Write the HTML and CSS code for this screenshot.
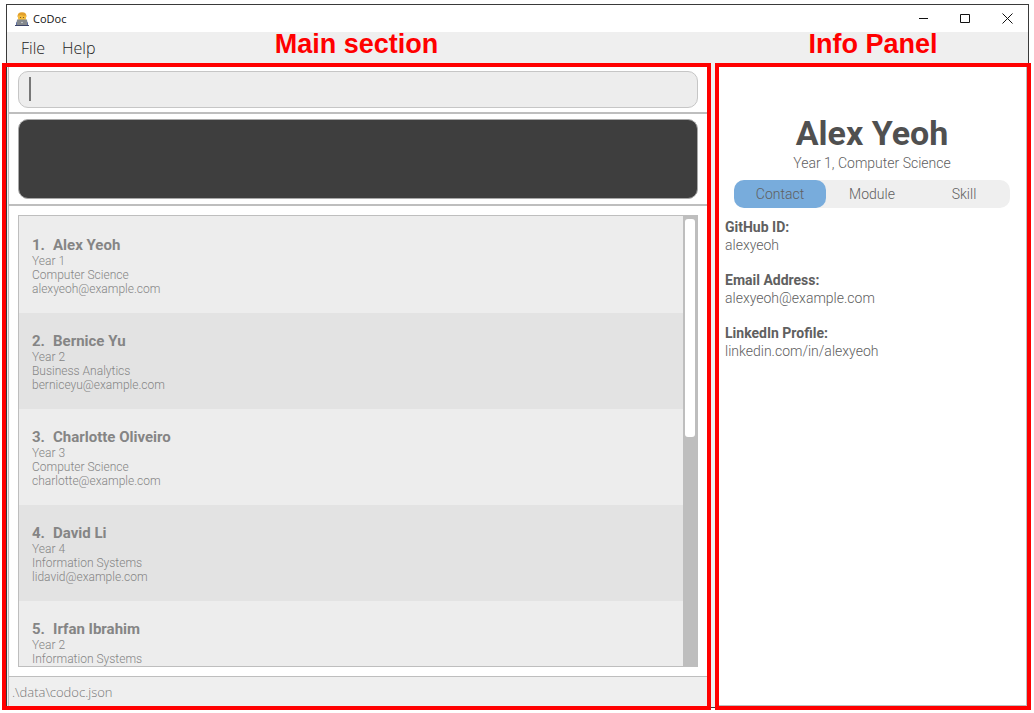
FILE: index.html
```html
<!DOCTYPE html>
<html lang="en">
<head>
<meta charset="utf-8">
<title>CoDoc</title>
<link rel="stylesheet" href="styles.css">
</head>
<body>
<div class="window">
  <header class="titlebar">
    <svg class="app-icon" viewBox="0 0 14 14" aria-hidden="true">
      <path d="M1 14v-2q0-3 3-3.500h6q3 .5 3 3.500v2z" fill="#3a55a4"/>
      <rect x="3" y="1.500" width="8" height="8" rx="3.500" fill="#f5bd3c"/>
      <path d="M2.500 5.500Q2 .3 7 .2q5 .1 4.500 5.300l-1-2Q8 4.200 6 3l-2.500.8z" fill="#e2a02b"/>
      <circle cx="5.500" cy="5.500" r=".6" fill="#6b4a2a"/>
      <circle cx="8.500" cy="5.500" r=".6" fill="#6b4a2a"/>
      <path d="M2 7.500h10l.5 5.500h-11z" fill="#85898d"/>
      <path d="M0 13h14v1H0z" fill="#3c4468"/>
      <circle cx="7" cy="10.500" r=".8" fill="#d5d8da"/>
    </svg>
    <span class="app-name">CoDoc</span>
    <div class="window-controls">
      <button type="button" aria-label="Minimize"><svg viewBox="0 0 11 11"><path d="M1 5.500h9"/></svg></button>
      <button type="button" aria-label="Maximize"><svg viewBox="0 0 11 11"><path d="M.5 1.500h9v8h-9z"/></svg></button>
      <button type="button" aria-label="Close"><svg viewBox="0 0 11 11"><path d="M.5.5l10 10M10.500.5l-10 10"/></svg></button>
    </div>
  </header>
  <nav class="menubar" aria-label="Menu">
    <button type="button">File</button>
    <button type="button">Help</button>
  </nav>
  <div class="workspace">
    <main class="main-section">
      <div class="callout callout-main"><span>Main section</span></div>
      <div class="command-row">
        <input class="command" type="text" aria-label="Command">
        <span class="caret"></span>
      </div>
      <div class="result-row"><output class="result" aria-label="Result"></output></div>
      <div class="list-row">
        <div class="list-frame">
          <ol class="people">
            <li><h2><span>1.</span>Alex Yeoh</h2><p>Year 1</p><p>Computer Science</p><p>alexyeoh@example.com</p></li>
            <li><h2><span>2.</span>Bernice Yu</h2><p>Year 2</p><p>Business Analytics</p><p>berniceyu@example.com</p></li>
            <li><h2><span>3.</span>Charlotte Oliveiro</h2><p>Year 3</p><p>Computer Science</p><p>charlotte@example.com</p></li>
            <li><h2><span>4.</span>David Li</h2><p>Year 4</p><p>Information Systems</p><p>lidavid@example.com</p></li>
            <li><h2><span>5.</span>Irfan Ibrahim</h2><p>Year 2</p><p>Information Systems</p></li>
          </ol>
          <div class="scrollbar"><div class="thumb"></div></div>
        </div>
      </div>
      <footer class="status">.\data\codoc.json</footer>
    </main>
    <aside class="info-panel">
      <div class="callout callout-info"><span>Info Panel</span></div>
      <div class="profile">
        <h1>Alex Yeoh</h1>
        <p class="course">Year 1, Computer Science</p>
        <div class="tabs" role="tablist">
          <button type="button" role="tab" aria-selected="true">Contact</button>
          <button type="button" role="tab" aria-selected="false">Module</button>
          <button type="button" role="tab" aria-selected="false">Skill</button>
        </div>
      </div>
      <dl class="details">
        <div><dt>GitHub ID:</dt><dd>alexyeoh</dd></div>
        <div><dt>Email Address:</dt><dd>alexyeoh@example.com</dd></div>
        <div><dt>LinkedIn Profile:</dt><dd>linkedin.com/in/alexyeoh</dd></div>
      </dl>
    </aside>
  </div>
</div>
</body>
</html>
```
FILE: styles.css
```css
* { box-sizing: border-box; }

body {
  margin: 0;
  padding: 4px 5px 5px 6px;
  height: 100vh;
  background: #fff;
  font-family: Roboto, "Liberation Sans", sans-serif;
  font-weight: 300;
  overflow: hidden;
}

h1, h2, p, ol, dl, dd { margin: 0; padding: 0; }
button { border: 0; padding: 0; background: none; font: inherit; color: inherit; }

.window {
  display: flex;
  flex-direction: column;
  height: 100%;
  border: 1px solid #3a3a3a;
  background: #efefef;
}

.titlebar {
  display: flex;
  align-items: center;
  height: 27px;
  padding-left: 8px;
  background: #fff;
}
.app-icon { width: 14px; height: 14px; }
.app-name {
  margin-left: 4px;
  font: 400 11px/16px "Open Sans", sans-serif;
  color: #111;
}
.window-controls { display: flex; height: 100%; margin-left: auto; }
.window-controls button {
  display: flex;
  align-items: center;
  justify-content: center;
  width: 42px;
}
.window-controls svg { width: 11px; height: 11px; fill: none; stroke: #111; }

.menubar {
  display: flex;
  gap: 17px;
  height: 31px;
  padding-left: 14px;
  font: 300 16px "Open Sans", sans-serif;
  color: #222;
}

.workspace {
  flex: 1;
  display: grid;
  grid-template-columns: minmax(0, 1fr) 308px;
  gap: 12px;
  min-height: 0;
  padding: 0 1px;
}

.main-section, .info-panel {
  position: relative;
  display: flex;
  flex-direction: column;
  min-height: 0;
  background: #fff;
}
.main-section { border-left: 1px solid #bebebe; }

.command-row, .result-row { border-bottom: 2px solid #bebebe; }
.command-row { position: relative; padding: 8px 9px 4px; }
.command {
  display: block;
  width: 100%;
  height: 37px;
  padding: 0 10px;
  border: 1px solid #c6c6c6;
  border-radius: 10px;
  background: #ededed;
  font: inherit;
  font-size: 18px;
  outline: none;
}
.caret {
  position: absolute;
  left: 20px;
  top: 14px;
  width: 2px;
  height: 24px;
  background: #777;
}
.result-row { padding: 5px 9px; }
.result {
  display: block;
  height: 80px;
  border: 1px solid #a8a8a8;
  border-radius: 10px;
  background: #3e3e3e;
}

.list-row { flex: 1; display: flex; min-height: 0; padding: 9px; }
.list-frame {
  flex: 1;
  display: flex;
  border: 1px solid #bebebe;
  background: #ededed;
  overflow: hidden;
}
.people { flex: 1; padding-top: 1px; list-style: none; }
.people li {
  height: 96px;
  padding: 19px 13px 0;
  background: #ededed;
  color: #858585;
  font-size: 12px;
  line-height: 14px;
}
.people li:nth-child(even) { background: #e3e3e3; }
.people h2 { font-size: 15px; font-weight: 700; line-height: 18px; }
.people h2 span { display: inline-block; width: 21px; }
.scrollbar { width: 14px; padding: 3px 2px; background: #bebebe; }
.thumb { height: 49%; border-radius: 3px; background: #fff; }

.status {
  height: 31px;
  padding: 0 3px;
  border-top: 1px solid #bebebe;
  background: #efefef;
  color: #777;
  font: 300 13px/30px "Open Sans", sans-serif;
}

.info-panel {
  margin-bottom: 1px;
  padding: 50px 16px 0 6px;
  border-right: 1px solid #bebebe;
  border-bottom: 1px solid #bebebe;
  color: #606060;
}
.profile { padding-left: 9px; text-align: center; }
.profile h1 {
  color: #505050;
  font-size: 34px;
  font-weight: 700;
  line-height: 40px;
}
.course { font-size: 14px; line-height: 20px; }
.tabs {
  display: grid;
  grid-template-columns: repeat(3, 1fr);
  height: 28px;
  margin: 7px 0 10px;
  border-radius: 10px;
  background: #efefef;
  font-size: 14px;
}
.tabs button { border-radius: 10px; }
.tabs button[aria-selected="true"] { background: #78acdc; }
.details { display: grid; gap: 17px; font-size: 14px; line-height: 18px; }
.details dt { font-weight: 700; }

/* Annotation frames drawn over the window edges */
.callout {
  position: absolute;
  z-index: 2;
  top: 0;
  border: 4px solid #f00;
  pointer-events: none;
}
.callout span {
  position: absolute;
  bottom: 100%;
  left: 0;
  right: 0;
  padding-bottom: 7px;
  text-align: center;
  color: #f00;
  font: 700 27px/32px "Liberation Sans", Arial, sans-serif;
}
.callout-main { left: -7px; right: -4px; bottom: -3px; }
.callout-info { left: -4px; right: -5px; bottom: -5px; }
```
